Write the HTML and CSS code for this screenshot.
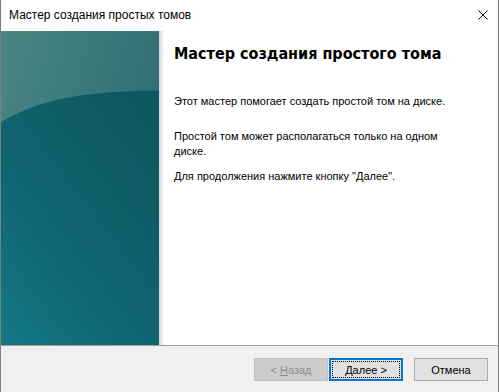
FILE: index.html
```html
<!DOCTYPE html>
<html lang="ru">
<head>
  <meta charset="UTF-8">
  <title>Мастер создания простых томов</title>
  <link rel="stylesheet" href="styles.css">
</head>
<body>

<div class="window">
  <!-- Title bar -->
  <div class="titlebar">
    <span class="title">Мастер создания простых томов</span>
    <svg class="close" width="10" height="10" viewBox="0 0 10 10">
      <path d="M0.5 0.5 L9.5 9.5 M9.5 0.5 L0.5 9.5" stroke="#000" stroke-width="1" fill="none"/>
    </svg>
  </div>

  <!-- Wizard body -->
  <div class="main">
    <div class="banner">
      <svg width="158" height="314" viewBox="0 0 158 314" preserveAspectRatio="none">
        <defs>
          <linearGradient id="top" x1="0" y1="0" x2="1" y2="0.6">
            <stop offset="0" stop-color="#4a8683"/>
            <stop offset="1" stop-color="#2a6b71"/>
          </linearGradient>
          <linearGradient id="bottom" x1="0.8" y1="0" x2="0" y2="1">
            <stop offset="0" stop-color="#0d5860"/>
            <stop offset="0.6" stop-color="#106674"/>
            <stop offset="1" stop-color="#147985"/>
          </linearGradient>
        </defs>
        <rect width="158" height="314" fill="url(#top)"/>
        <path d="M0 91 C 35 70, 75 60, 158 59 L158 314 L0 314 Z" fill="url(#bottom)"/>
        <path d="M0 91 C 35 70, 75 60, 158 59" stroke="#3f7d80" stroke-width="1" fill="none" opacity="0.5"/>
      </svg>
    </div>
    <div class="shadow"></div>
    <div class="content">
      <h1>Мастер создания простого тома</h1>
      <p class="intro">Этот мастер помогает создать простой том на диске.</p>
      <p class="note">Простой том может располагаться только на одном диске.</p>
      <p class="next">Для продолжения нажмите кнопку "Далее".</p>
    </div>
  </div>

  <!-- Buttons -->
  <div class="footer">
    <button class="btn disabled">&lt; <u>Н</u>азад</button>
    <button class="btn focused"><span class="focus-ring"><u>Д</u>алее &gt;</span></button>
    <button class="btn cancel">Отмена</button>
  </div>
</div>

</body>
</html>
```

FILE: styles.css
```css
body {
  margin: 0;
  background-color: #ffffff;
  font-family: "Liberation Sans", Arial, sans-serif;
}

.window {
  width: 499px;
  height: 392px;
  box-sizing: border-box;
  border-left: 1px solid #7f7f7f;
  border-right: 1px solid #7f7f7f;
  display: flex;
  flex-direction: column;
  background-color: #ffffff;
}

.titlebar {
  height: 31px;
  display: flex;
  align-items: center;
  justify-content: space-between;
  padding: 0 10px 0 8px;
  flex-shrink: 0;
}

.title {
  font-size: 12px;
  color: #000;
  margin-top: -1px;
}

.close {
  display: block;
  margin-top: -1px;
}

.main {
  height: 314px;
  display: flex;
  flex-shrink: 0;
  border-bottom: 1px solid #a0a0a0;
}

.banner {
  width: 158px;
  height: 314px;
}

.banner svg {
  display: block;
}

.shadow {
  width: 5px;
  background: linear-gradient(to right, #d4d4d4, #ffffff);
}

.content {
  padding-left: 10px;
  color: #000;
}

h1 {
  font-size: 16px;
  font-weight: bold;
  font-family: "DejaVu Sans", Verdana, sans-serif;
  font-stretch: condensed;
  line-height: 20px;
  margin: 13px 0 0 0;
}

.content p {
  font-size: 11px;
  line-height: 15px;
  margin: 0;
  max-width: 285px;
}

.intro {
  margin-top: 30px !important;
}

.note {
  margin-top: 20px !important;
}

.next {
  margin-top: 10px !important;
}

.footer {
  flex: 1;
  background-color: #f0f0f0;
  display: flex;
  justify-content: flex-end;
  align-items: flex-start;
  padding: 12px 10px 0 0;
}

.btn {
  width: 74px;
  height: 23px;
  box-sizing: border-box;
  font-family: "Liberation Sans", Arial, sans-serif;
  font-size: 11px;
  background-color: #e1e1e1;
  border: 1px solid #adadad;
  color: #000;
  padding: 0;
}

.btn.disabled {
  background-color: #cccccc;
  border-color: #bfbfbf;
  color: #8c8c8c;
  margin-right: 1px;
}

.btn.focused {
  border: 2px solid #0078d7;
  padding: 1px;
}

.focus-ring {
  display: flex;
  align-items: center;
  justify-content: center;
  height: 100%;
  border: 1px dotted #000;
  box-sizing: border-box;
}

.btn.cancel {
  margin-left: 11px;
}
```
